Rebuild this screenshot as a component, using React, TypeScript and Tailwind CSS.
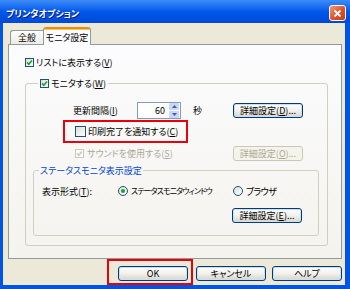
import type { ReactNode } from "react";

function Check({ checked, disabled, size = 9 }: { checked?: boolean; disabled?: boolean; size?: number }) {
  return (
    <span
      className={
        disabled
          ? "flex shrink-0 items-center justify-center border border-[#CAC8BB] bg-white"
          : "flex shrink-0 items-center justify-center border border-[#1C5180] bg-gradient-to-br from-[#DCDCD7] to-white"
      }
      style={{ width: size, height: size }}
    >
      {checked && (
        <svg width="7" height="7" viewBox="0 0 7 7">
          <path
            d="M1 3.4 L2.8 5.3 L6 1.4"
            fill="none"
            stroke={disabled ? "#CAC8BB" : "#21A121"}
            strokeWidth="1.6"
          />
        </svg>
      )}
    </span>
  );
}

function Radio({ checked }: { checked?: boolean }) {
  return (
    <span className="flex h-[10px] w-[10px] shrink-0 items-center justify-center rounded-full border border-[#1C5180] bg-gradient-to-br from-[#DCDCD7] to-white">
      {checked && <span className="h-[4px] w-[4px] rounded-full bg-[#21A121]" />}
    </span>
  );
}

function XpButton({ children, disabled }: { children: ReactNode; disabled?: boolean }) {
  return (
    <div
      className={
        disabled
          ? "flex h-[15px] w-[70px] shrink-0 items-center justify-center rounded-[3px] border border-[#C9C7BA] bg-[#F5F4EA] text-[#ACA899]"
          : "flex h-[15px] w-[70px] shrink-0 items-center justify-center rounded-[3px] border border-[#003C74] bg-gradient-to-b from-white via-[#F2F1EC] to-[#D8D4CA] shadow-[inset_0_0_0_1px_#CEDDF6]"
      }
    >
      {children}
    </div>
  );
}

export default function App() {
  return (
    <div className="flex h-[289px] w-[350px] flex-col overflow-hidden whitespace-nowrap bg-[#0054E3] font-['Noto_Sans_CJK_JP',sans-serif] text-[9px] leading-none text-black [font-feature-settings:'palt']">
      {/* title bar */}
      <div className="flex h-[23px] shrink-0 items-center justify-between bg-gradient-to-b from-[#3D8BF7] via-[#0058EC] to-[#0049D4] pl-[6px] pr-[4px] pt-[3px]">
        <span className="text-[9px] font-bold text-white [text-shadow:1px_1px_#0A1883]">プリンタオプション</span>
        <div className="flex h-[16px] w-[17px] items-center justify-center rounded-[3px] border border-white bg-gradient-to-br from-[#F09A7C] via-[#E2542C] to-[#C43C14]">
          <svg width="9" height="9" viewBox="0 0 9 9">
            <path d="M1.5 1.5 L7.5 7.5 M7.5 1.5 L1.5 7.5" stroke="white" strokeWidth="1.8" />
          </svg>
        </div>
      </div>

      {/* body */}
      <div className="mb-[4px] ml-[3px] mr-[5px] flex flex-1 flex-col bg-[#ECE9D8] pl-[5px] pt-[4px]">
        {/* tabs */}
        <div className="flex items-end pl-[2px]">
          <div className="flex h-[14px] w-[33px] items-center justify-center rounded-tl-[3px] border-l border-t border-[#919B9C] bg-gradient-to-b from-white to-[#ECEBE6]">
            全般
          </div>
          <div className="relative z-10 -mb-[1px] flex h-[18px] w-[48px] flex-col rounded-t-[3px] border-x border-[#919B9C] bg-[#FCFCFE]">
            <div className="h-[3px] rounded-t-[2px] border-t-2 border-[#E68B2C] bg-[#FFC73C]" />
            <div className="flex flex-1 items-center justify-center">モニタ設定</div>
          </div>
        </div>

        {/* panel */}
        <div className="flex h-[215px] w-[334px] flex-col border border-[#919B9C] bg-gradient-to-b from-[#FCFCFE] to-[#F4F3EE] pl-[16px] pt-[12px]">
          <div className="flex h-[11px] items-center gap-[2px]">
            <Check checked />
            <span>
              リストに表示する(<u>V</u>)
            </span>
          </div>

          <fieldset className="mt-[10px] w-[303px] rounded-[3px] border border-[#D0D0BF]">
            <legend className="ml-[12px] px-[2px]">
              <div className="flex h-[11px] items-center gap-[2px]">
                <Check checked />
                <span>
                  モニタする(<u>W</u>)
                </span>
              </div>
            </legend>

            <div className="flex flex-col pb-[9px] pt-[13px]">
              <div className="flex h-[17px] items-center pl-[47px]">
                <span className="w-[64px]">
                  更新間隔(<u>I</u>)
                </span>
                <div className="flex h-[17px] w-[44px] items-center border border-[#7F9DB9] bg-white">
                  <span className="flex-1 pr-[4px] text-right">60</span>
                  <div className="mr-[1px] flex h-[15px] w-[10px] flex-col gap-[1px]">
                    <div className="flex flex-1 items-center justify-center rounded-[1px] bg-[#C6D6FC]">
                      <svg width="5" height="3" viewBox="0 0 5 3">
                        <path d="M0 3 L2.5 0 L5 3 Z" fill="#4D6185" />
                      </svg>
                    </div>
                    <div className="flex flex-1 items-center justify-center rounded-[1px] bg-[#C6D6FC]">
                      <svg width="5" height="3" viewBox="0 0 5 3">
                        <path d="M0 0 L2.5 3 L5 0 Z" fill="#4D6185" />
                      </svg>
                    </div>
                  </div>
                </div>
                <span className="ml-[12px] w-[40px]">秒</span>
                <XpButton>
                  詳細設定(<u>D</u>)...
                </XpButton>
              </div>

              <div className="ml-[37px] mt-[1px] flex h-[23px] w-[125px] items-center gap-[2px] border-2 border-[#E8000B] pl-[10px]">
                <Check size={11} />
                <span>
                  印刷完了を通知する(<u>C</u>)
                </span>
              </div>

              <div className="mt-[3px] flex h-[15px] items-center pl-[49px]">
                <div className="flex w-[158px] items-center gap-[3px] text-[#ACA899]">
                  <Check checked disabled />
                  <span>
                    サウンドを使用する(<u>S</u>)
                  </span>
                </div>
                <XpButton disabled>
                  詳細設定(<u>O</u>)...
                </XpButton>
              </div>

              <fieldset className="ml-[7px] mt-[4px] w-[286px] rounded-[3px] border border-[#D0D0BF]">
                <legend className="ml-[5px] px-[1px]">
                  <div className="flex h-[11px] items-center text-[#0046D5]">ステータスモニタ表示設定</div>
                </legend>
                <div className="flex flex-col pb-[12px] pl-[8px] pt-[9px]">
                  <div className="flex h-[12px] items-center">
                    <span className="w-[76px]">
                      表示形式(<u>T</u>):
                    </span>
                    <div className="flex w-[115px] items-center gap-[3px]">
                      <Radio checked />
                      <span className="text-[8px] tracking-[-0.9px]">ステータスモニタウィンドウ</span>
                    </div>
                    <div className="flex items-center gap-[3px]">
                      <Radio />
                      <span className="tracking-[-0.5px]">ブラウザ</span>
                    </div>
                  </div>
                  <div className="ml-[190px] mt-[11px]">
                    <XpButton>
                      詳細設定(<u>E</u>)...
                    </XpButton>
                  </div>
                </div>
              </fieldset>
            </div>
          </fieldset>
        </div>

        {/* dialog buttons */}
        <div className="ml-[99px] flex items-start">
          <div className="border-2 border-[#E8000B] pb-[2px] pl-[9px] pr-[3px] pt-[5px]">
            <XpButton>OK</XpButton>
          </div>
          <div className="ml-[3px] pt-[7px]">
            <XpButton>キャンセル</XpButton>
          </div>
          <div className="ml-[6px] pt-[7px]">
            <XpButton>ヘルプ</XpButton>
          </div>
        </div>
      </div>
    </div>
  );
}
